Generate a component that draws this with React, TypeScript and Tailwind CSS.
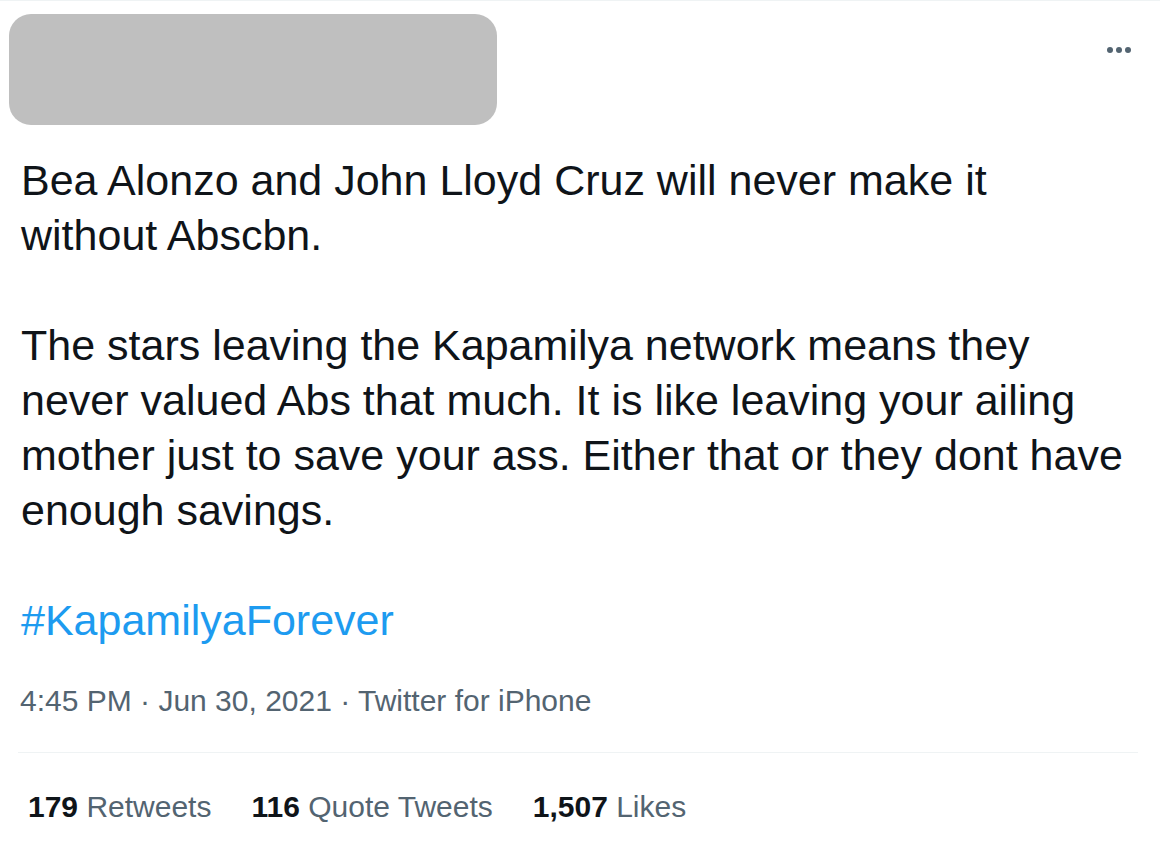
import React from 'react';

const App: React.FC = () => {
  return (
    <div className="w-[1160px] h-[855px] bg-white border-t border-[#eff3f4] font-['Liberation_Sans',Arial,sans-serif] text-[#0f1419] overflow-hidden">
      <div className="flex justify-between items-start pl-[9px] pr-[29px] pt-[13px]">
        <div className="w-[488px] h-[111px] rounded-[22px] bg-[#bfbfbf]" />
        <div className="flex gap-[3px] mt-[33px]">
          <span className="w-[6px] h-[6px] rounded-full bg-[#536471]" />
          <span className="w-[6px] h-[6px] rounded-full bg-[#536471]" />
          <span className="w-[6px] h-[6px] rounded-full bg-[#536471]" />
        </div>
      </div>

      <div className="pl-[21px] pr-[20px] pt-[28px] text-[43px] leading-[55px]">
        <p>Bea Alonzo and John Lloyd Cruz will never make it<br />without Abscbn.</p>
        <p className="mt-[55px]">
          The stars leaving the Kapamilya network means they<br />
          never valued Abs that much. It is like leaving your ailing<br />
          mother just to save your ass. Either that or they dont have<br />
          enough savings.
        </p>
        <p className="mt-[55px] text-[#1d9bf0]">#KapamilyaForever</p>
      </div>

      <div className="px-[20px] mt-[30px] text-[30px] text-[#536471]">
        4:45 PM · Jun 30, 2021 · Twitter for iPhone
      </div>

      <div className="ml-[18px] mr-[22px] mt-[29px] border-t border-[#eff3f4]" />

      <div className="flex gap-[40px] px-[28px] mt-[31px] text-[30px] text-[#536471]">
        <span><b className="text-[#0f1419]">179</b> Retweets</span>
        <span><b className="text-[#0f1419]">116</b> Quote Tweets</span>
        <span><b className="text-[#0f1419]">1,507</b> Likes</span>
      </div>
    </div>
  );
};

export default App;
